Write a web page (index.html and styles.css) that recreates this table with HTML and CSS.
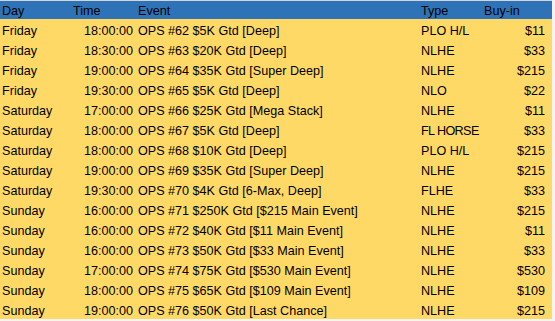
FILE: index.html
```html
<!DOCTYPE html>
<html>
<head>
<meta charset="utf-8">
<link rel="stylesheet" href="styles.css">
</head>
<body>
<div class="sheet">
  <div class="row head">
    <div class="c day">Day</div><div class="c time-h">Time</div><div class="c event">Event</div><div class="c type">Type</div><div class="c buy-h">Buy-in</div>
  </div>
  <div class="row"><div class="c day">Friday</div><div class="c time">18:00:00</div><div class="c event">OPS #62 $5K Gtd [Deep]</div><div class="c type">PLO H/L</div><div class="c buy">$11</div></div>
  <div class="row"><div class="c day">Friday</div><div class="c time">18:30:00</div><div class="c event">OPS #63 $20K Gtd [Deep]</div><div class="c type">NLHE</div><div class="c buy">$33</div></div>
  <div class="row"><div class="c day">Friday</div><div class="c time">19:00:00</div><div class="c event">OPS #64 $35K Gtd [Super Deep]</div><div class="c type">NLHE</div><div class="c buy">$215</div></div>
  <div class="row"><div class="c day">Friday</div><div class="c time">19:30:00</div><div class="c event">OPS #65 $5K Gtd [Deep]</div><div class="c type">NLO</div><div class="c buy">$22</div></div>
  <div class="row"><div class="c day">Saturday</div><div class="c time">17:00:00</div><div class="c event">OPS #66 $25K Gtd [Mega Stack]</div><div class="c type">NLHE</div><div class="c buy">$11</div></div>
  <div class="row"><div class="c day">Saturday</div><div class="c time">18:00:00</div><div class="c event">OPS #67 $5K Gtd [Deep]</div><div class="c type narrow">FL HORSE</div><div class="c buy">$33</div></div>
  <div class="row"><div class="c day">Saturday</div><div class="c time">18:00:00</div><div class="c event">OPS #68 $10K Gtd [Deep]</div><div class="c type">PLO H/L</div><div class="c buy">$215</div></div>
  <div class="row"><div class="c day">Saturday</div><div class="c time">19:00:00</div><div class="c event">OPS #69 $35K Gtd [Super Deep]</div><div class="c type">NLHE</div><div class="c buy">$215</div></div>
  <div class="row"><div class="c day">Saturday</div><div class="c time">19:30:00</div><div class="c event">OPS #70 $4K Gtd [6-Max, Deep]</div><div class="c type">FLHE</div><div class="c buy">$33</div></div>
  <div class="row"><div class="c day">Sunday</div><div class="c time">16:00:00</div><div class="c event">OPS #71 $250K Gtd [$215 Main Event]</div><div class="c type">NLHE</div><div class="c buy">$215</div></div>
  <div class="row"><div class="c day">Sunday</div><div class="c time">16:00:00</div><div class="c event">OPS #72 $40K Gtd [$11 Main Event]</div><div class="c type">NLHE</div><div class="c buy">$11</div></div>
  <div class="row"><div class="c day">Sunday</div><div class="c time">16:00:00</div><div class="c event">OPS #73 $50K Gtd [$33 Main Event]</div><div class="c type">NLHE</div><div class="c buy">$33</div></div>
  <div class="row"><div class="c day">Sunday</div><div class="c time">17:00:00</div><div class="c event">OPS #74 $75K Gtd [$530 Main Event]</div><div class="c type">NLHE</div><div class="c buy">$530</div></div>
  <div class="row"><div class="c day">Sunday</div><div class="c time">18:00:00</div><div class="c event">OPS #75 $65K Gtd [$109 Main Event]</div><div class="c type">NLHE</div><div class="c buy">$109</div></div>
  <div class="row"><div class="c day">Sunday</div><div class="c time">19:00:00</div><div class="c event">OPS #76 $50K Gtd [Last Chance]</div><div class="c type">NLHE</div><div class="c buy">$215</div></div>
</div>
</body>
</html>
```

FILE: styles.css
```css
html, body {
  margin: 0;
  padding: 0;
  background: #f4f4f4;
  overflow: hidden;
  height: 321px;
}
.sheet {
  width: 552px;
  font-family: "Liberation Sans", Arial, sans-serif;
  font-size: 12.6px;
  color: #000;
}
.row {
  display: grid;
  grid-template-columns: 71px 65px 282px 63px 71px;
  height: 20px;
  background: #ffd966;
}
.row.head {
  height: 18px;
  border-top: 1px solid #d4d4d4;
  background: #2e72b8;
}
.c {
  padding-top: 5px;
  line-height: 15px;
  white-space: nowrap;
}
.head .c {
  padding-top: 3px;
}
.day { padding-left: 2px; }
.time { text-align: right; padding-right: 3px; }
.time-h { padding-left: 2px; }
.event { padding-left: 2px; }
.type { padding-left: 3px; }
.narrow { letter-spacing: -0.6px; }
.buy { text-align: right; padding-right: 7px; }
.buy-h { padding-left: 3px; }
```
